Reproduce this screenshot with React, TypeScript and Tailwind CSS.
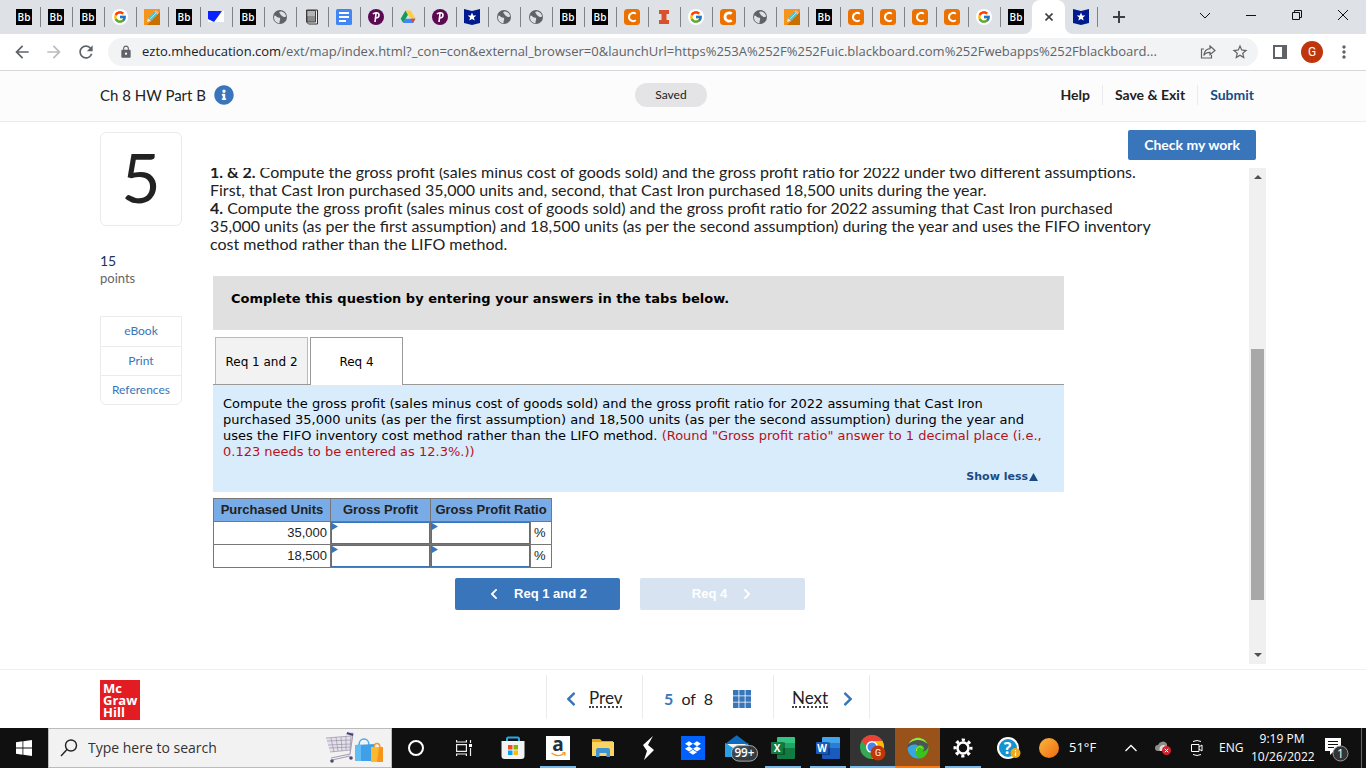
import type { ReactNode } from 'react';
import { FcGoogle } from 'react-icons/fc';
import { FaChevronLeft, FaChevronRight, FaDropbox, FaInfoCircle } from 'react-icons/fa';
import { MdArrowBack, MdArrowForward, MdLock, MdMoreVert, MdRefresh, MdStarBorder } from 'react-icons/md';

/* ---------- favicons ---------- */

function BbIcon() {
  return (
    <span className="flex size-4 items-center justify-center bg-black font-['Open_Sans',sans-serif] text-[10px] font-semibold leading-none text-white">
      Bb
    </span>
  );
}

function GoogleIcon() {
  return (
    <span className="flex size-4 items-center justify-center rounded-full bg-white">
      <FcGoogle className="size-3.5" />
    </span>
  );
}

function PencilIcon() {
  return (
    <svg viewBox="0 0 16 16" className="size-4">
      <rect width="16" height="16" fill="#f7941d" />
      <path d="M16 3v13H3z" fill="#c96f00" />
      <path d="M3 13l1-4 3 3z" fill="#f9e2b8" />
      <path d="M4 9l7-7 3 3-7 7z" fill="#4fc3c9" />
      <path d="M5.500 10.500l7-7" stroke="#a6ecec" />
      <path d="M10.500 2.500l1.500-1.200 2.700 2.700-1.200 1.500z" fill="#e9b7c0" />
    </svg>
  );
}

function FlagIcon() {
  return (
    <svg viewBox="0 0 16 16" className="size-4">
      <rect y="2" width="16" height="11" fill="#fff" />
      <path d="M0 2h14l-5 7H6v4L0 10z" fill="#0a22ff" />
      <path d="M6 9h3l-3 4z" fill="#0a22ff" />
    </svg>
  );
}

function GlobeIcon() {
  return (
    <svg viewBox="0 0 16 16" className="size-4">
      <circle cx="8" cy="8" r="7" fill="#5f6368" />
      <path d="M2.500 6.500c2 0 2 2 4 2s2 1.500 1.500 2.500-.5 2-.5 3.200C4 14 1.800 11 2 8z" fill="#dee1e6" />
      <path d="M8 2.500c-1 1-1 1.500 0 2s0 1.500 1.500 2 1 1.500 2.500 1.500 1.500-.5 2.200 0C14 5 12 2.300 8 2.500z" fill="#dee1e6" />
    </svg>
  );
}

function BookIcon() {
  return (
    <svg viewBox="0 0 16 16" className="size-4">
      <path d="M2.500 1h11v14h-9l-2-2z" fill="#eee" stroke="#333" />
      <path d="M3 1.500h8.500v11.500H3z" fill="#8c8c8c" stroke="#444" />
      <path d="M3.500 2h7.500v5H3.500z" fill="#b4b4b4" />
    </svg>
  );
}

function DocsIcon() {
  return (
    <svg viewBox="0 0 16 16" className="size-4">
      <rect width="16" height="16" rx="1.500" fill="#4285f4" />
      <path d="M3 4h10M3 8h10M3 12h7" stroke="#fff" strokeWidth="1.800" />
    </svg>
  );
}

function PearsonIcon() {
  return (
    <svg viewBox="0 0 16 16" className="size-4">
      <circle cx="8" cy="8" r="8" fill="#5b0a52" />
      <path d="M5 5.200C6 3.500 11 2.800 11 6c0 2.300-2 3-3.500 3M8 4.500L7 13" stroke="#fff" strokeWidth="1.600" fill="none" />
    </svg>
  );
}

function DriveIcon() {
  return (
    <svg viewBox="0 0 16 16" className="size-4">
      <path d="M5.500 1.500L8 5.800 3.200 14 .700 9.800z" fill="#0f9d58" />
      <path d="M5.500 1.500h5l5 8.300h-5z" fill="#ffcd40" />
      <path d="M5.500 9.800h9.800L13 14H3.200z" fill="#4285f4" />
      <path d="M13 9.800h2.400L13 14l-2-4.200z" fill="#ea4335" />
    </svg>
  );
}

function StarShieldIcon() {
  return (
    <svg viewBox="0 0 16 16" className="size-4">
      <path d="M0 0l8 2 8-2v14l-8 2-8-2z" fill="#001a8f" />
      <path d="M8 3.500l1.200 2.900 3.100.2-2.400 2 .8 3L8 9.900l-2.700 1.700.8-3-2.400-2 3.100-.2z" fill="#fff" />
    </svg>
  );
}

function CheggIcon({ heavy = false }: { heavy?: boolean }) {
  return (
    <svg viewBox="0 0 16 16" className="size-4">
      <rect width="16" height="16" rx="3.500" fill="#eb7100" />
      <path
        d="M11.800 4.700C10.500 3.800 8.800 3.600 7.400 4.300 4.200 5.800 4.200 10.200 7.400 11.700c1.400.7 3.100.5 4.400-.4"
        fill="none"
        stroke="#fff"
        strokeWidth={heavy ? 2.800 : 2}
      />
    </svg>
  );
}

function IllinoisIcon() {
  return (
    <svg viewBox="0 0 16 16" className="size-4">
      <path d="M3 1h10v4h-2.500v6H13v4H3v-4h2.500V5H3z" fill="#d9512c" />
    </svg>
  );
}

const favicons: Record<string, ReactNode> = {
  bb: <BbIcon />,
  google: <GoogleIcon />,
  pencil: <PencilIcon />,
  flag: <FlagIcon />,
  globe: <GlobeIcon />,
  book: <BookIcon />,
  docs: <DocsIcon />,
  pearson: <PearsonIcon />,
  drive: <DriveIcon />,
  star: <StarShieldIcon />,
  chegg: <CheggIcon />,
  cheggBold: <CheggIcon heavy />,
  illinois: <IllinoisIcon />,
};

const tabs = [
  'bb', 'bb', 'bb', 'google', 'pencil', 'bb', 'flag', 'bb', 'globe', 'book', 'docs', 'pearson',
  'drive', 'pearson', 'star', 'globe', 'globe', 'bb', 'bb', 'chegg', 'illinois', 'google',
  'cheggBold', 'globe', 'pencil', 'bb', 'chegg', 'chegg', 'chegg', 'chegg', 'google', 'bb',
];

/* ---------- browser chrome ---------- */

function BrowserTab({ icon, divider = true }: { icon: string; divider?: boolean }) {
  return (
    <button className="relative flex w-8 shrink-0 items-center justify-center" aria-label={`${icon} tab`}>
      {favicons[icon]}
      {divider && <span className="absolute -right-px top-[7px] h-5 w-px bg-[#808488]" />}
    </button>
  );
}

function TabStrip() {
  return (
    <div className="flex h-[34px] bg-[#dee1e6] pl-2">
      {tabs.map((icon, i) => (
        <BrowserTab key={i} icon={icon} divider={i < tabs.length - 1} />
      ))}
      <button className="relative flex w-[33px] items-center justify-center rounded-t-lg bg-white" aria-label="Close tab">
        <svg viewBox="0 0 49 8" className="absolute -left-2 bottom-0 h-2 w-[49px] max-w-none" fill="#fff">
          <path d="M0 8a8 8 0 008-8v8zM49 8a8 8 0 01-8-8v8z" />
        </svg>
        <svg viewBox="0 0 8 8" className="size-2" stroke="#3c4043" strokeWidth="1.600">
          <path d="M.5.500l7 7M7.500.500l-7 7" />
        </svg>
      </button>
      <BrowserTab icon="star" />
      <button className="flex w-11 items-center justify-center" aria-label="New tab">
        <svg viewBox="0 0 12 12" className="size-3" stroke="#3c4043" strokeWidth="2">
          <path d="M6 0v12M0 6h12" />
        </svg>
      </button>
      <div className="ml-auto flex pb-1">
        {[
          ['Search tabs', 'M1 4l5 5 5-5'],
          ['Minimize', 'M1 6.500h10'],
          ['Restore', 'M1.500 3.500h7v7h-7zM3.500 3.500v-2h7v7h-2'],
          ['Close', 'M1 1l10 10M11 1L1 11'],
        ].map(([label, d]) => (
          <button key={label} className="flex w-[46px] items-center justify-center" aria-label={label}>
            <svg viewBox="0 0 12 12" className="size-3" fill="none" stroke="#111">
              <path d={d} />
            </svg>
          </button>
        ))}
      </div>
    </div>
  );
}

function Toolbar() {
  return (
    <div className="flex h-[37px] items-center border-b border-[#d5d7da] bg-white pl-1.5 text-[#5f6368]">
      <button className="flex w-8 justify-center" aria-label="Back"><MdArrowBack className="size-5" /></button>
      <button className="flex w-8 justify-center text-[#babcbe]" aria-label="Forward"><MdArrowForward className="size-5" /></button>
      <button className="flex w-8 justify-center" aria-label="Reload"><MdRefresh className="size-5" /></button>
      <div className="ml-1.5 flex h-7 min-w-0 flex-1 items-center rounded-full bg-[#f1f3f4] pl-[11px]">
        <MdLock className="size-3.5 shrink-0" />
        <p className="ml-[9px] min-w-0 flex-1 overflow-hidden whitespace-nowrap font-['Open_Sans',sans-serif] text-[13px]">
          <span className="text-[#202124]">ezto.mheducation.com</span>
          /ext/map/index.html?_con=con&amp;external_browser=0&amp;launchUrl=https%253A%252F%252Fuic.blackboard.com%252Fwebapps%252Fblackboard...
        </p>
        <button className="flex w-8 shrink-0 justify-center" aria-label="Share">
          <svg viewBox="0 0 16 16" className="size-4" fill="none" stroke="currentColor" strokeWidth="1.200">
            <path d="M4 5H1.500v9h10v-3" />
            <path d="M10 2l5 4.500-5 4.300V8.300C7 8.200 5 9.200 3.800 11.500 4.200 7.800 6.300 5 10 4.700z" />
          </svg>
        </button>
        <button className="mr-0.5 flex w-8 shrink-0 justify-center" aria-label="Bookmark"><MdStarBorder className="size-[18px]" /></button>
      </div>
      <button className="ml-1.5 flex w-8 justify-center" aria-label="Side panel">
        <svg viewBox="0 0 14 14" className="size-3.5">
          <path d="M1 1h12v12H1z" fill="none" stroke="currentColor" strokeWidth="2" />
          <path d="M9 1h4v12H9z" fill="currentColor" />
        </svg>
      </button>
      <button className="flex w-8 justify-center" aria-label="Profile">
        <span className="flex size-[22px] items-center justify-center rounded-full bg-[#bf360c] font-[Roboto,sans-serif] text-xs text-white">G</span>
      </button>
      <button className="mr-1.5 flex w-8 justify-center" aria-label="Menu"><MdMoreVert className="size-5" /></button>
    </div>
  );
}

/* ---------- assignment page ---------- */

function AssignmentHeader() {
  return (
    <header className="flex h-[51px] items-center border-b border-[#ebebeb] bg-[#fcfcfc] pb-0.5 pl-[100px] pr-[112px] text-[#222]">
      <div className="flex flex-1 items-center gap-2">
        <h1 className="text-[15px]">Ch 8 HW Part B</h1>
        <FaInfoCircle className="size-5 text-[#3875bb]" />
      </div>
      <span className="mr-3 rounded-full bg-[#e4e3e5] px-5 py-1 text-xs">Saved</span>
      <nav className="flex flex-1 justify-end text-sm font-bold">
        <a href="#help" className="border-r border-[#ebebeb] pr-3">Help</a>
        <a href="#save" className="border-r border-[#ebebeb] px-3">Save &amp; Exit</a>
        <a href="#submit" className="pl-3 text-[#1b4b84]">Submit</a>
      </nav>
    </header>
  );
}

function QuestionInfo() {
  return (
    <aside className="w-[82px] shrink-0 pt-2.5">
      <div className="flex h-[94px] items-center justify-center rounded-md border border-[#ebebeb] pb-1 text-[68px] leading-none text-[#222]">
        5
      </div>
      <p className="mt-[26px] text-sm leading-[18px] text-[#1b365d]">15</p>
      <p className="text-[13px] leading-4 text-[#666]">points</p>
      <nav className="mt-[30px] divide-y divide-[#ebebeb] rounded-b-md border border-[#ebebeb] text-center text-xs leading-7 text-[#3875bb]">
        <a href="#ebook" className="block pb-px">eBook</a>
        <a href="#print" className="block">Print</a>
        <a href="#references" className="block">References</a>
      </nav>
    </aside>
  );
}

function AnswerInput({ label }: { label: string }) {
  return (
    <>
      <input aria-label={label} className="block h-[22px] w-full border border-[#3875bb] bg-white px-1 outline-none" />
      <svg viewBox="0 0 6 7" className="absolute left-px top-px h-[7px] w-1.5">
        <path d="M0 0l6 3.500-6 3.500z" fill="#3875bb" />
      </svg>
    </>
  );
}

function AnswerTable() {
  return (
    <table className="mt-1.5 table-fixed border-collapse font-['Liberation_Sans',Arial,sans-serif] text-[13px] leading-[22px] text-[#222]">
      <colgroup>
        <col className="w-[117px]" />
        <col className="w-[100px]" />
        <col className="w-[100px]" />
        <col className="w-[21px]" />
      </colgroup>
      <thead>
        <tr className="bg-[#79ace6]">
          <th className="whitespace-nowrap border border-[#777] p-0">Purchased Units</th>
          <th className="whitespace-nowrap border border-[#777] p-0">Gross Profit</th>
          <th colSpan={2} className="whitespace-nowrap border border-[#777] p-0">Gross Profit Ratio</th>
        </tr>
      </thead>
      <tbody>
        {['35,000', '18,500'].map((units) => (
          <tr key={units}>
            <td className="border border-[#777] py-0 pl-0 pr-[3px] text-right">{units}</td>
            <td className="relative border border-[#777] p-0"><AnswerInput label={`Gross profit for ${units} units`} /></td>
            <td className="relative border border-[#777] p-0"><AnswerInput label={`Gross profit ratio for ${units} units`} /></td>
            <td className="border border-[#777] p-0 pl-[3px]">%</td>
          </tr>
        ))}
      </tbody>
    </table>
  );
}

function QuestionBody() {
  return (
    <div className="min-w-0 flex-1 overflow-hidden">
      <div className="-mt-[5px] max-w-[945px] text-base leading-[18px] text-[#222]">
        <p><b>1. &amp; 2.</b> Compute the gross profit (sales minus cost of goods sold) and the gross profit ratio for 2022 under two different assumptions. First, that Cast Iron purchased 35,000 units and, second, that Cast Iron purchased 18,500 units during the year.</p>
        <p><b>4.</b> Compute the gross profit (sales minus cost of goods sold) and the gross profit ratio for 2022 assuming that Cast Iron purchased 35,000 units (as per the first assumption) and 18,500 units (as per the second assumption) during the year and uses the FIFO inventory cost method rather than the LIFO method.</p>
      </div>

      <div className="ml-[3px] mt-[23px] max-w-[851px] font-['DejaVu_Sans',Verdana,sans-serif] text-[13px] text-black">
        <div className="h-[54px] bg-[#e0e0e0] px-[18px] pt-[15px] font-bold leading-4">
          Complete this question by entering your answers in the tabs below.
        </div>

        <div className="mt-[7px] flex gap-0.5 border-b border-[#999] pl-0.5 text-xs">
          <button className="h-[47px] w-[93px] border border-b-0 border-[#bbb] bg-[#f2f2f2] pt-px">Req 1 and 2</button>
          <button className="-mb-px h-12 w-[93px] border border-b-0 border-[#999] bg-white">Req 4</button>
        </div>

        <div className="bg-[#d9ecfb] px-2.5 pb-[7px] pt-[11px] leading-4">
          <p>
            Compute the gross profit (sales minus cost of goods sold) and the gross profit ratio for 2022 assuming that Cast Iron
            purchased 35,000 units (as per the first assumption) and 18,500 units (as per the second assumption) during the year and
            uses the FIFO inventory cost method rather than the LIFO method.{' '}
            <span className="text-[#b5121b]">(Round "Gross profit ratio" answer to 1 decimal place (i.e., 0.123 needs to be entered as 12.3%.))</span>
          </p>
          <div className="mt-[9px] flex justify-end pr-4">
            <button className="flex items-center text-[11px] font-bold leading-4 text-[#1b4b84]">
              Show less
              <svg viewBox="0 0 9 8" className="ml-px h-2 w-[9px]" fill="currentColor"><path d="M4.500 0L9 8H0z" /></svg>
            </button>
          </div>
        </div>

        <AnswerTable />

        <div className="mt-2.5 flex gap-5 pl-[242px] font-['Liberation_Sans',Arial,sans-serif] text-[13px] font-bold text-white">
          <button className="flex h-8 w-[165px] items-center justify-center gap-3.5 rounded-xs bg-[#3875bb]">
            <FaChevronLeft className="size-3" />
            Req 1 and 2
          </button>
          <button disabled className="flex h-8 w-[165px] items-center justify-center gap-3.5 rounded-xs bg-[#d7e3f1]">
            Req 4
            <FaChevronRight className="size-3" />
          </button>
        </div>
      </div>
    </div>
  );
}

function ScrollTrack() {
  return (
    <div className="flex w-[17px] shrink-0 flex-col items-center justify-between bg-[#f0f0f0] py-[7px]">
      <svg viewBox="0 0 8 4" className="h-1 w-2" fill="#505050"><path d="M4 0l4 4H0z" /></svg>
      <div className="mt-[167px] h-[251px] w-[13px] bg-[#a8a8a8]" />
      <svg viewBox="0 0 8 4" className="mt-[51px] h-1 w-2" fill="#505050"><path d="M0 0h8L4 4z" /></svg>
    </div>
  );
}

function QuestionNav() {
  return (
    <footer className="flex h-[59px] border-t border-[#f0f0f0] pl-[100px] text-base text-[#222]">
      <div className="mt-2.5 size-10 bg-[#e31b23] px-[3px] pt-0.5 font-['Open_Sans',sans-serif] text-[13px] font-bold leading-3 text-white">
        <div>Mc</div>
        <div>Graw</div>
        <div>Hill</div>
      </div>
      <nav className="ml-[406px] mt-[5px] flex h-11 items-stretch divide-x divide-[#ebebeb] border-x border-[#ebebeb]">
        <button className="flex w-24 items-center gap-2.5 pl-4 pt-1">
          <FaChevronLeft className="size-4 text-[#3875bb]" />
          <span className="border-b-2 border-dotted border-[#444] text-[17px] leading-4">Prev</span>
        </button>
        <div className="flex w-[131px] items-center pl-[21px] pt-1">
          <span className="whitespace-pre"><b className="text-[#3875bb]">5</b>{'  of  8'}</span>
          <svg viewBox="0 0 18 18" className="ml-5 size-[18px]" fill="#3875bb">
            <path d="M0 0h5.500v5.500H0zM6.300 0h5.400v5.500H6.300zM12.500 0H18v5.500h-5.500zM0 6.300h5.500v5.400H0zM6.300 6.300h5.400v5.400H6.300zM12.500 6.300H18v5.400h-5.500zM0 12.500h5.500V18H0zM6.300 12.500h5.400V18H6.300zM12.500 12.500H18V18h-5.500z" />
          </svg>
        </div>
        <button className="flex w-[95px] items-center gap-3 pl-[18px] pt-1">
          <span className="border-b-2 border-dotted border-[#444] text-[17px] leading-4">Next</span>
          <FaChevronRight className="size-4 text-[#3875bb]" />
        </button>
      </nav>
    </footer>
  );
}

/* ---------- windows taskbar ---------- */

function ShoppingArt() {
  return (
    <svg viewBox="0 0 60 32" className="ml-auto mr-[7px] h-8 w-[60px]" fill="none">
      <path d="M2 6l4 14 21-2L29 3z" fill="#e4e0ea" />
      <path d="M2 6l25-2M3 9l24-1M4 13l23-1M5 16l22-1M6 20l21-2M7 6l3 14M12 5l2 14M17 5l1 14M22 4v14M27 4l-1 14" stroke="#9b94a8" strokeWidth=".7" />
      <path d="M22 2l7-1M29 1l-3 21-19 4M8 28l18-4" stroke="#a79fb5" strokeWidth="1.200" />
      <path d="M23 1l6 2" stroke="#4b3d78" strokeWidth="2" />
      <circle cx="8" cy="29" r="1.800" fill="#54466f" />
      <circle cx="27" cy="26" r="1.800" fill="#54466f" />
      <path d="M35 13c0-8 10-8 10 0" stroke="#4aa8e8" strokeWidth="1.500" />
      <path d="M31 13l20-1v17H31z" fill="#3f9fe8" />
      <path d="M31 13l6-.3V29h-6z" fill="#62bdf5" />
      <path d="M50 16c0-6 6-6 6 0" stroke="#f39a1e" strokeWidth="1.500" />
      <path d="M47 15h12v15H47z" fill="#fcb92e" />
      <path d="M55 15h4v15h-6z" fill="#f7941d" />
    </svg>
  );
}

function OfficeIcon({ letter, light, mid, dark }: { letter: string; light: string; mid: string; dark: string }) {
  return (
    <svg viewBox="0 0 24 22" className="h-[22px] w-6">
      <path d="M6 1q0-1 1-1h16q1 0 1 1v5H6z" fill={light} />
      <path d="M6 6h18v5H6z" fill={mid} />
      <path d="M6 11h18v10q0 1-1 1H7q-1 0-1-1z" fill={dark} />
      <path d="M6 5h7q1 0 1 1v12H6z" fill="#000" opacity=".3" />
      <rect y="5" width="12" height="12" rx="1" fill={dark} />
      <text x="6" y="14.500" textAnchor="middle" fontFamily="Open Sans, sans-serif" fontWeight="700" fontSize="10" fill="#fff">{letter}</text>
    </svg>
  );
}

function StoreIcon() {
  return (
    <svg viewBox="0 0 24 24" className="size-6">
      <path d="M6 6V3q0-1.500 1.500-1.500h9Q18 1.500 18 3v3" fill="none" stroke="#28a8e8" strokeWidth="2" />
      <path d="M.500 5h23v15q0 3-3 3h-17q-3 0-3-3z" fill="#f3f3f3" />
      <path d="M7 9h4.500v4.500H7z" fill="#f25022" />
      <path d="M12.500 9H17v4.500h-4.500z" fill="#7fba00" />
      <path d="M7 14.500h4.500V19H7z" fill="#00a4ef" />
      <path d="M12.500 14.500H17V19h-4.500z" fill="#ffb900" />
    </svg>
  );
}

function AmazonIcon() {
  return (
    <svg viewBox="0 0 24 24" className="size-6">
      <rect width="24" height="24" fill="#fff" />
      <text x="12" y="15" textAnchor="middle" fontFamily="Open Sans, sans-serif" fontWeight="700" fontSize="19" fill="#232f3e">a</text>
      <path d="M5.500 17c4 3 9 3 12.500.5M18.500 19.500c.6-1.200.7-2 .4-2.800-.8-.2-1.600-.1-2.600.3" fill="none" stroke="#f7981d" strokeWidth="1.300" />
    </svg>
  );
}

function ExplorerIcon() {
  return (
    <svg viewBox="0 0 22 20" className="h-5 w-[22px]">
      <path d="M0 1h8l2 2h11v6H0z" fill="#e8a317" />
      <path d="M0 4h22v14H0z" fill="#fcd462" />
      <path d="M4 19v-7q0-2 2-2h10q2 0 2 2v7h-3.500v-4h-7v4z" fill="#3f94d1" />
    </svg>
  );
}

function MailIcon() {
  return (
    <svg viewBox="0 0 36 28" className="ml-2.5 h-7 w-9">
      <path d="M0 10L12 1l12 9-12 8z" fill="#0f6cbd" />
      <path d="M0 9v14h24V9l-12 8z" fill="#50b8f0" />
      <path d="M2 10h20l-10 7z" fill="#f2f8fc" />
      <path d="M0 9l24 14H0z" fill="#28a0e6" />
      <rect x="6.500" y="11.500" width="27" height="16" rx="8" fill="#3a3f45" fillOpacity=".9" stroke="#aaa" />
      <text x="20" y="23.500" textAnchor="middle" fontFamily="Open Sans, sans-serif" fontWeight="600" fontSize="12" fill="#fff">99+</text>
    </svg>
  );
}

function ChromeIcon() {
  return (
    <svg viewBox="0 0 26 26" className="size-[26px]">
      <circle cx="12" cy="12" r="12" fill="#34a853" />
      <path d="M1.600 6A12 12 0 0122.400 6L12 12H7z" fill="#ea4335" />
      <path d="M22.400 6A12 12 0 0112 24l5-9-3-9z" fill="#fbbc05" />
      <circle cx="12" cy="12" r="6" fill="#fff" />
      <circle cx="12" cy="12" r="4.500" fill="#4285f4" />
      <circle cx="18" cy="18" r="7.500" fill="#bf360c" />
      <text x="18" y="21" textAnchor="middle" fontFamily="Roboto, sans-serif" fontSize="9" fill="#fff">G</text>
    </svg>
  );
}

function WebrootIcon() {
  return (
    <svg viewBox="0 0 22 22" className="size-[22px]">
      <circle cx="11" cy="11" r="10.500" fill="#4a5656" />
      <path d="M1.500 7C5-1.500 17-1.500 20.500 7 15 1.500 7 1.500 1.500 7z" fill="#9be52a" />
      <path d="M.5 11C4 7 9 6.500 11.500 9 8 12 8.500 17 14 21 7 23 1 18 .5 11z" fill="#3aa6e0" />
      <path d="M21.500 9c.8 7-4 12.500-9 12.500C7.500 19 6.500 10.500 12 8.500c5-1.500 7 4 3 6 3.500 0 5.500-2.500 6.500-5.500z" fill="#38c41c" />
      <path d="M9.500 14c-.5-4 4-6 6-2.500" stroke="#b7f24a" fill="none" />
    </svg>
  );
}

function GearIcon() {
  return (
    <svg viewBox="0 0 20 20" className="size-5" fill="none" stroke="#fff">
      <circle cx="10" cy="10" r="5.500" strokeWidth="2.600" />
      <circle cx="10" cy="10" r="8" strokeWidth="3" strokeDasharray="3.140 3.143" strokeDashoffset="1.500" />
    </svg>
  );
}

function HelpIcon() {
  return (
    <svg viewBox="0 0 24 22" className="h-[22px] w-6">
      <circle cx="11" cy="11" r="10" fill="#1592d0" stroke="#fff" strokeWidth="2" />
      <text x="10.500" y="17" textAnchor="middle" fontFamily="Open Sans, sans-serif" fontWeight="700" fontSize="16" fill="#fff">?</text>
      <circle cx="18.500" cy="16" r="5" fill="#f3a917" />
      <path d="M18.500 13v1.300M18.500 15.500v3.500" stroke="#fff" strokeWidth="1.300" />
    </svg>
  );
}

function TaskButton({ label, children, bar = '', className = '' }: { label: string; children: ReactNode; bar?: string; className?: string }) {
  return (
    <button aria-label={label} className={`relative flex w-[45px] shrink-0 items-center justify-center ${className}`}>
      {children}
      {bar && <span className={`absolute bottom-0 h-0.5 ${bar}`} />}
    </button>
  );
}

function Taskbar() {
  return (
    <div className="flex h-10 bg-[#101010] font-['Open_Sans',sans-serif] text-white">
      <button className="flex w-12 shrink-0 items-center justify-center" aria-label="Start">
        <svg viewBox="0 0 16 16" className="size-4" fill="#fff">
          <path d="M0 2.200l6.500-.9v6.200H0zM7.300 1.200L16 0v7.500H7.300zM0 8.400h6.500v6.300L0 13.800zM7.300 8.400H16V16l-8.700-1.200z" />
        </svg>
      </button>
      <label className="flex w-[344px] shrink-0 items-center border border-[#bbb] bg-[#f2f2f2]">
        <svg viewBox="0 0 18 18" className="ml-[11px] size-[18px] shrink-0" fill="none" stroke="#222" strokeWidth="1.400">
          <circle cx="11" cy="6.500" r="5.500" />
          <path d="M7 10.500L1 17" />
        </svg>
        <input type="text" placeholder="Type here to search" className="ml-2.5 w-40 bg-transparent text-sm outline-none placeholder:text-[#333]" />
        <ShoppingArt />
      </label>
      <button className="flex w-12 items-center justify-center" aria-label="Cortana">
        <span className="size-4 rounded-full border-2 border-white" />
      </button>
      <button className="mr-0.5 flex w-12 items-center justify-center" aria-label="Task view">
        <svg viewBox="0 0 16 16" className="size-4" fill="none" stroke="#eee" strokeWidth="1.200">
          <path d="M.6 4.600h9.800v6.800H.600zM.6 0v2h9.800V0M.6 16v-2h9.800v2M14.500 0v3M14.500 8v8" />
          <path d="M13 4h3v3h-3z" fill="#fff" stroke="none" />
        </svg>
      </button>
      <TaskButton label="Store"><StoreIcon /></TaskButton>
      <TaskButton label="Amazon" bar="w-9 bg-[#76b9ed]"><AmazonIcon /></TaskButton>
      <TaskButton label="File Explorer"><ExplorerIcon /></TaskButton>
      <TaskButton label="S">
        <svg viewBox="0 0 12 24" className="h-6 w-3" fill="#fff">
          <path d="M11 0L1 9l4 6-3 9 10-10-6-5z" />
        </svg>
      </TaskButton>
      <TaskButton label="Dropbox">
        <span className="flex size-6 items-center justify-center bg-[#0061ff]"><FaDropbox className="size-4" /></span>
      </TaskButton>
      <TaskButton label="Mail"><MailIcon /></TaskButton>
      <TaskButton label="Excel" bar="w-9 bg-[#76b9ed]">
        <OfficeIcon letter="X" light="#33c481" mid="#21a366" dark="#107c41" />
      </TaskButton>
      <TaskButton label="Word" bar="w-9 bg-[#76b9ed]">
        <OfficeIcon letter="W" light="#41a5ee" mid="#2b7cd3" dark="#185abd" />
      </TaskButton>
      <TaskButton label="Chrome" bar="w-full bg-[#76b9ed]" className="bg-[#333]"><ChromeIcon /></TaskButton>
      <TaskButton label="Webroot" bar="w-full bg-[#ff7a0e]" className="bg-[#9a521b]"><WebrootIcon /></TaskButton>
      <TaskButton label="Settings" bar="w-9 bg-[#76b9ed]"><GearIcon /></TaskButton>

      <div className="ml-auto flex shrink-0 items-center text-xs">
        <HelpIcon />
        <span className="ml-[18px] size-5 rounded-full bg-linear-to-br from-[#f6b73c] to-[#f0660a]" />
        <span className="ml-2.5 w-[46px] text-[13px]">51°F</span>
        <svg viewBox="0 0 12 8" className="ml-2.5 h-2 w-3" fill="none" stroke="#fff" strokeWidth="1.300"><path d="M.5 7L6 1.500 11.500 7" /></svg>
        <svg viewBox="0 0 16 14" className="ml-[18px] h-3.5 w-4">
          <path d="M3 10a3 3 0 010-6 5 5 0 019-1v7z" fill="#8d8d8d" />
          <path d="M5 10a4 4 0 014-6l3 2v4z" fill="#ddd" />
          <circle cx="11.500" cy="9.500" r="4.500" fill="#d9202c" />
          <path d="M9.800 7.800l3.400 3.400M13.200 7.800l-3.400 3.400" stroke="#fff" />
        </svg>
        <svg viewBox="0 0 12 16" className="ml-5 h-4 w-3" fill="none" stroke="#fff">
          <path d="M.5 4.500h7.500v7H.500zM8 7l3-2v6L8 9M2 1.500q4-2 8 0M2 14.500q4 2 8 0" />
        </svg>
        <span className="ml-4 w-6">ENG</span>
        <div className="ml-2 w-[62px] whitespace-nowrap text-center leading-[18px]">
          <div>9:19 PM</div>
          <div>10/26/2022</div>
        </div>
        <svg viewBox="0 0 24 24" className="ml-3 mt-1 size-6">
          <path d="M0 0h16v13H9l-4 4v-4H0z" fill="#fff" />
          <path d="M3 3.500h10M3 6.500h10M3 9.500h6" stroke="#101010" />
          <circle cx="15.500" cy="15.500" r="7.500" fill="#333" stroke="#999" />
          <text x="15.500" y="20" textAnchor="middle" fontFamily="Open Sans, sans-serif" fontSize="12" fill="#fff">1</text>
        </svg>
        <span className="ml-3 h-10 w-px bg-[#666]" />
        <span className="w-1" />
      </div>
    </div>
  );
}

export default function App() {
  return (
    <div className="flex min-h-screen flex-col bg-white font-[Lato,sans-serif]">
      <TabStrip />
      <Toolbar />
      <AssignmentHeader />
      <main className="flex flex-1 gap-7 px-[100px]">
        <QuestionInfo />
        <section className="flex min-w-0 flex-1 flex-col pb-[5px]">
          <div className="flex justify-end py-2 pr-2.5">
            <button className="h-[30px] rounded-xs bg-[#3875bb] px-4 pb-px text-sm font-bold text-white">Check my work</button>
          </div>
          <div className="flex flex-1">
            <QuestionBody />
            <ScrollTrack />
          </div>
        </section>
      </main>
      <QuestionNav />
      <Taskbar />
    </div>
  );
}
